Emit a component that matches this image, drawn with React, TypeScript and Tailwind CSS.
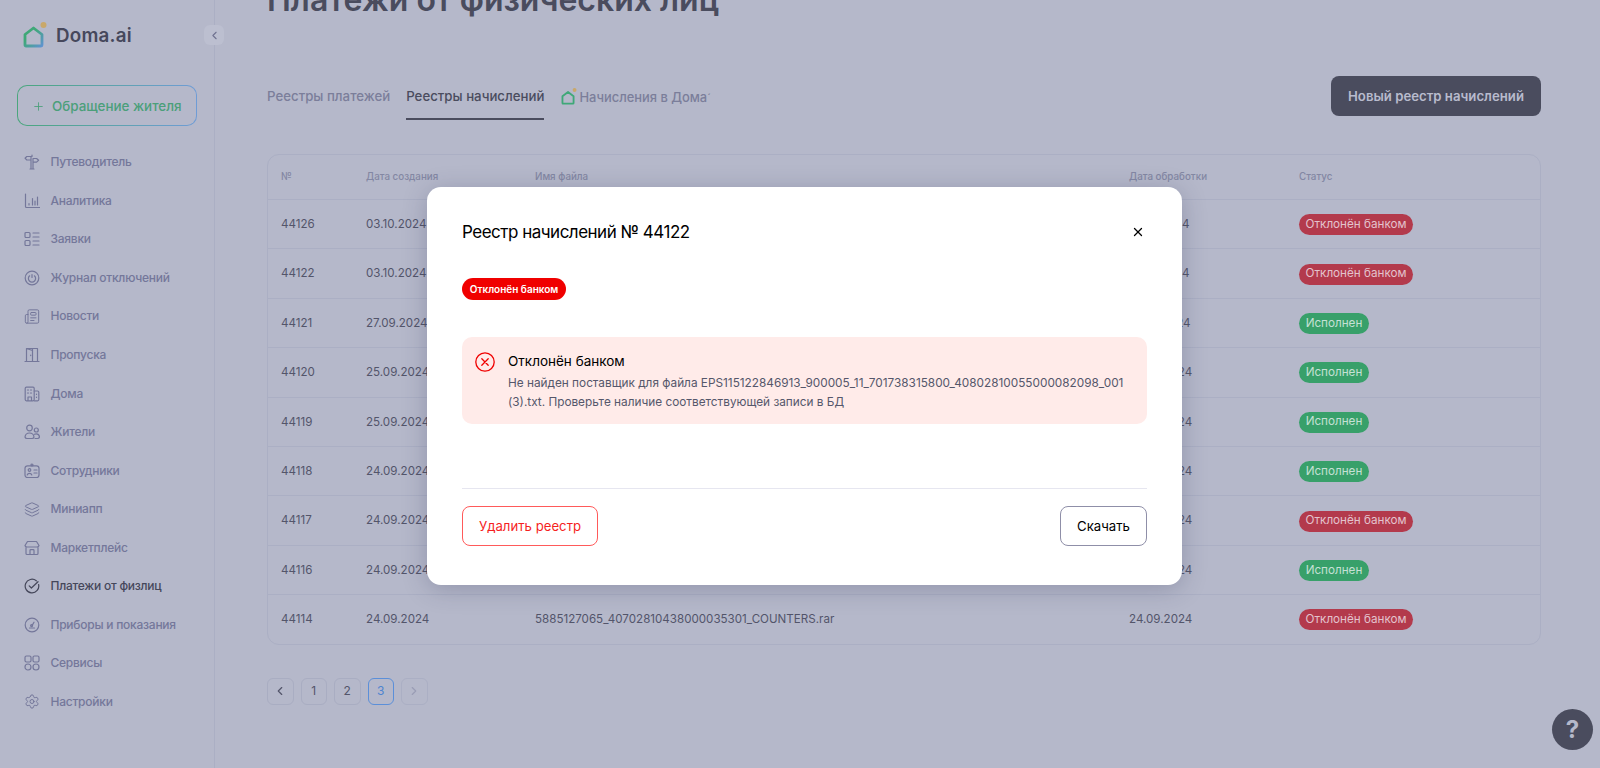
import type { ReactNode } from "react";
import { ChevronLeft, ChevronRight, Layers, Newspaper, Plus, Settings, X } from "lucide-react";

type Row = { id: string; created: string; file?: string; status: "rejected" | "done"; };

const rows: Row[] = [
  { id: "44126", created: "03.10.2024", status: "rejected" },
  { id: "44122", created: "03.10.2024", status: "rejected" },
  { id: "44121", created: "27.09.2024", status: "done" },
  { id: "44120", created: "25.09.2024", status: "done" },
  { id: "44119", created: "25.09.2024", status: "done" },
  { id: "44118", created: "24.09.2024", status: "done" },
  { id: "44117", created: "24.09.2024", status: "rejected" },
  { id: "44116", created: "24.09.2024", status: "done" },
  { id: "44114", created: "24.09.2024", file: "5885127065_40702810438000035301_COUNTERS.rar", status: "rejected" },
];

function Ico({ children }: { children: ReactNode }) {
  return (
    <svg viewBox="0 0 16 16" fill="none" stroke="currentColor" strokeWidth="1.2" strokeLinecap="round" strokeLinejoin="round" className="h-4 w-4">
      {children}
    </svg>
  );
}

const lucideProps = { size: 17, strokeWidth: 1.5 };

const nav: { label: string; icon: ReactNode; active?: boolean }[] = [
  {
    label: "Путеводитель",
    icon: (
      <Ico>
        <path d="M8 1v1.5M6 15h4M7 15V2.5H2.8L1 4.2l1.8 1.8H7M9 15V4.5h3.6l2 1.8-2 1.8H9" />
      </Ico>
    ),
  },
  {
    label: "Аналитика",
    icon: (
      <Ico>
        <path d="M1.5 1v12.5a1 1 0 0 0 1 1h13M5 12v-1.5M8.5 12V5.5M11 12V8M13.5 12V4" />
      </Ico>
    ),
  },
  {
    label: "Заявки",
    icon: (
      <Ico>
        <rect x="1" y="1.5" width="5" height="5" rx="1" />
        <rect x="1" y="9.5" width="5" height="5" rx="1" />
        <path d="M9 2h6M9 6h6M9 10h6M9 14h6" />
      </Ico>
    ),
  },
  {
    label: "Журнал отключений",
    icon: (
      <Ico>
        <circle cx="8" cy="8" r="6.8" />
        <path d="M5.6 5.8a3.6 3.6 0 1 0 4.8 0M8 4.5v3" />
      </Ico>
    ),
  },
  { label: "Новости", icon: <Newspaper {...lucideProps} /> },
  {
    label: "Пропуска",
    icon: (
      <Ico>
        <path d="M1 14.5h14M2.5 14.5v-13h11v13M8.5 1.5v13M2.5 1.5l6 2v11M6.7 8v.6" />
      </Ico>
    ),
  },
  {
    label: "Дома",
    icon: (
      <Ico>
        <rect x="1.2" y="1.2" width="9" height="13.6" rx="1.2" />
        <path d="M10.2 5h3.4a1.2 1.2 0 0 1 1.2 1.2v7.4a1.2 1.2 0 0 1-1.2 1.2h-3.4M3.5 4h1M6.5 4h1M3.5 7h1M6.5 7h1M4 14.5v-3.5h3.5v3.5M12.5 8v.5M12.5 11v.5" />
      </Ico>
    ),
  },
  {
    label: "Жители",
    icon: (
      <Ico>
        <circle cx="5.5" cy="4" r="2.8" />
        <circle cx="12.3" cy="6" r="2" />
        <path d="M1 13a2 2 0 0 0 2 1.5h5a2 2 0 0 0 2-1.5c-.3-2.5-2.2-4-4.5-4S1.3 10.5 1 13zM11 14.5h2.5a2 2 0 0 0 2-1.5c-.2-2-1.5-3.2-3.2-3.2-.7 0-1.3.2-1.8.5" />
      </Ico>
    ),
  },
  {
    label: "Сотрудники",
    icon: (
      <Ico>
        <rect x="1" y="2.8" width="14" height="11.7" rx="2.5" />
        <circle cx="8" cy="2" r="1" />
        <circle cx="5.5" cy="7" r="1.3" />
        <path d="M3.2 12a2.4 2.4 0 0 1 4.6 0M10 7h3M10 10h3" />
      </Ico>
    ),
  },
  { label: "Миниапп", icon: <Layers {...lucideProps} /> },
  {
    label: "Маркетплейс",
    icon: (
      <Ico>
        <path d="M3.5 1.5h9l2.5 4a2 2 0 0 1-2 1.5H3a2 2 0 0 1-2-1.5zM2 7v6.5a1 1 0 0 0 1 1h10a1 1 0 0 0 1-1V7M6 14.5v-4a.8.8 0 0 1 .8-.8h2.4a.8.8 0 0 1 .8.8v4" />
      </Ico>
    ),
  },
  {
    label: "Платежи от физлиц",
    active: true,
    icon: (
      <Ico>
        <path d="M14.6 6.5a6.8 6.8 0 1 1-2.3-3.7M5.2 7.8l2.2 2.2 6.6-6.3" />
      </Ico>
    ),
  },
  {
    label: "Приборы и показания",
    icon: (
      <Ico>
        <circle cx="8" cy="8" r="6.8" />
        <path d="M5.5 11h5M8 8.6l2-3.4" />
        <circle cx="7.6" cy="8.6" r="1" />
      </Ico>
    ),
  },
  {
    label: "Сервисы",
    icon: (
      <Ico>
        <rect x="1" y="1" width="6" height="6" rx="1.4" />
        <rect x="9" y="1" width="6" height="6" rx="1.4" />
        <circle cx="4" cy="12" r="3" />
        <circle cx="12" cy="12" r="3" />
      </Ico>
    ),
  },
  { label: "Настройки", icon: <Settings {...lucideProps} /> },
];

function Logo({ small }: { small?: boolean }) {
  return (
    <svg viewBox="0 0 24 26" fill="none" className={small ? "h-[17px] w-[16px]" : "h-[26px] w-[24px]"}>
      <defs>
        <linearGradient id="logo-l" x1="0" y1="0" x2="1" y2="1">
          <stop offset="0.35" stopColor="#3fa878" />
          <stop offset="1" stopColor="#5f93cf" />
        </linearGradient>
      </defs>
      <path
        d="M2 12.5 10.5 6 19 12.5V23a1 1 0 0 1-1 1H3a1 1 0 0 1-1-1z"
        stroke={small ? "#3fa878" : "url(#logo-l)"}
        strokeWidth="2.8"
        strokeLinejoin="round"
      />
      <circle cx="20.5" cy="3" r="3" fill="#c9a86a" />
    </svg>
  );
}

function Sidebar() {
  return (
    <aside className="relative flex h-full w-[215px] shrink-0 flex-col border-r border-[#abafc4] px-[17px]">
      <div className="mt-[22px] flex h-[26px] items-center gap-[9px] pl-[6px]">
        <Logo />
        <span className="mt-[2px] text-[18.8px] font-semibold tracking-[0.2px] text-[#46485c]">Doma.ai</span>
      </div>
      <button className="absolute right-[-10px] top-[25px] flex h-5 w-5 items-center justify-center rounded-md bg-[#bcbfd0] text-[#6f7290]">
        <ChevronLeft size={13} />
      </button>
      <div className="mt-[37px] flex h-[41px] w-[180px] items-center rounded-[10px] bg-gradient-to-r from-[#4aa67c] to-[#6f9cd6] p-px">
        <div className="flex h-full w-full items-center gap-[7px] rounded-[9px] bg-[#b5b8ca] pt-px pl-[14px] text-[#4b9f7a]">
          <Plus size={13} strokeWidth={1.6} />
          <span className="text-[13.4px] font-medium">Обращение жителя</span>
        </div>
      </div>
      <nav className="mt-[17px] flex flex-col">
        {nav.map((item) => (
          <div
            key={item.label}
            className={`flex h-[38.55px] items-center gap-[10.5px] pl-[7px] ${item.active ? "text-[#45475a]" : "text-[#74779a]"}`}
          >
            <span className="flex w-4 justify-center">{item.icon}</span>
            <span className="text-[12px] font-medium tracking-[-0.25px] whitespace-nowrap">{item.label}</span>
          </div>
        ))}
      </nav>
    </aside>
  );
}

function Status({ status }: { status: Row["status"] }) {
  return status === "rejected" ? (
    <span className="inline-flex h-[21px] w-[114px] items-center justify-center rounded-full bg-[#b33a4c] text-[11.7px] whitespace-nowrap text-[#e3c3cd]">
      Отклонён банком
    </span>
  ) : (
    <span className="inline-flex h-[21px] w-[70px] items-center justify-center rounded-full bg-[#38a06a] text-[11.7px] whitespace-nowrap text-[#c5e0d5]">
      Исполнен
    </span>
  );
}

function RegistryTable() {
  return (
    <div className="mt-[34px] overflow-hidden rounded-[12px] border border-[#abafc4] text-[11.6px]">
      <div className="grid h-[44px] grid-cols-[85px_169px_594px_170px_1fr] items-center pt-px pl-[13px] text-[9.8px] font-medium text-[#8387a3]">
        <span>№</span>
        <span>Дата создания</span>
        <span>Имя файла</span>
        <span>Дата обработки</span>
        <span>Статус</span>
      </div>
      {rows.map((row) => (
        <div
          key={row.id}
          className="grid h-[49.4px] grid-cols-[85px_169px_594px_170px_1fr] items-center border-t border-[#abafc4] pt-px pl-[13px] text-[#53556a]"
        >
          <span>{row.id}</span>
          <span>{row.created}</span>
          <span className="whitespace-nowrap">{row.file}</span>
          <span>{row.created}</span>
          <span>
            <Status status={row.status} />
          </span>
        </div>
      ))}
    </div>
  );
}

function Pagination() {
  const base = "flex h-[27px] w-[26.5px] items-center justify-center rounded-[6px] border text-[12px]";
  return (
    <div className="mt-[33px] flex gap-[7px]">
      <div className={`${base} border-[#a9adc2] text-[#53556a]`}>
        <ChevronLeft size={14} />
      </div>
      <div className={`${base} border-[#a9adc2] text-[#53556a]`}>1</div>
      <div className={`${base} border-[#a9adc2] text-[#53556a]`}>2</div>
      <div className={`${base} border-[#5b8fd9] text-[#4f84d0]`}>3</div>
      <div className={`${base} border-[#abafc4] text-[#9a9db5]`}>
        <ChevronRight size={14} />
      </div>
    </div>
  );
}

function Modal() {
  return (
    <div className="absolute top-[187px] left-[427px] w-[755px] rounded-[14px] bg-white px-[35px] pt-[33px] pb-[39px] shadow-[0_4px_24px_rgba(40,44,80,0.25)]">
      <div className="flex h-6 items-center justify-between">
        <h2 className="mt-[2px] text-[17px] font-normal tracking-[-0.5px] text-black">Реестр начислений № 44122</h2>
        <X size={14} strokeWidth={2.2} className="mr-[2px] text-black" />
      </div>
      <span className="mt-[34px] flex h-[22px] w-[104px] items-center justify-center rounded-full bg-[#f00000] text-[10px] font-semibold whitespace-nowrap text-white">
        Отклонён банком
      </span>
      <div className="mt-[37px] flex h-[87px] gap-[13px] rounded-[10px] bg-[#ffebe9] pt-[14px] pl-[13px]">
        <svg viewBox="0 0 20 20" fill="none" stroke="#f00000" strokeWidth="1.3" strokeLinecap="round" className="mt-px h-5 w-5 shrink-0">
          <circle cx="10" cy="10" r="9.2" />
          <path d="M6.8 6.8l6.4 6.4M13.2 6.8l-6.4 6.4" />
        </svg>
        <div>
          <div className="text-[13.5px] leading-5 text-black">Отклонён банком</div>
          <p className="mt-[3px] w-[630px] text-[11.8px] leading-[19px] text-[#55576b]">
            Не найден поставщик для файла EPS115122846913_900005_11_701738315800_40802810055000082098_001 (3).txt. Проверьте наличие соответствующей записи в БД
          </p>
        </div>
      </div>
      <div className="mt-[64px] border-t border-[#e6e6f0]" />
      <div className="mt-[17px] flex justify-between">
        <button className="h-10 w-[136px] rounded-[8px] border border-[#ff5a5a] pt-px text-[13.2px] text-[#f51f1f]">
          Удалить реестр
        </button>
        <button className="h-10 w-[87px] rounded-[8px] border border-[#8f8fa8] pt-px text-[13.2px] text-black">
          Скачать
        </button>
      </div>
    </div>
  );
}

export default function App() {
  return (
    <div className="relative flex h-[768px] w-full overflow-hidden bg-[#b5b8ca] font-['Inter',sans-serif]">
      <Sidebar />
      <main className="flex-1 pr-[59px] pl-[52px]">
        <h1 className="mt-[-22px] text-[32px] leading-[44px] font-semibold whitespace-nowrap text-[#4a4c5e]">
          Платежи от физических лиц
        </h1>
        <div className="mt-[54px] flex h-[44px] items-start justify-between">
          <div className="flex h-full gap-[16px] text-[13.25px]">
            <div className="flex h-10 items-center pt-[2px] font-medium text-[#7b7e9a]">Реестры платежей</div>
            <div className="flex h-full flex-col border-b-2 border-[#4a4c5e]">
              <div className="flex h-10 items-center pt-[2px] font-medium text-[#4a4c5e]">Реестры начислений</div>
            </div>
            <div className="flex h-10 items-center gap-[2px] pl-px text-[#7b7e9a]">
              <Logo small />
              <span className="mt-[4px] text-[12.9px] font-medium">Начисления в Дома<span className="text-[11px]">´</span></span>
            </div>
          </div>
          <button className="h-10 w-[210px] rounded-[8px] bg-[#4a4c5e] pt-[2px] text-[13.2px] font-semibold text-[#b8bbcd]">
            Новый реестр начислений
          </button>
        </div>
        <RegistryTable />
        <Pagination />
      </main>
      <div className="absolute right-[7px] bottom-[18px] flex h-[41px] w-[41px] items-center justify-center rounded-full bg-[#4a4c5e] text-[24px] font-bold text-[#b5b8ca]">
        ?
      </div>
      <Modal />
    </div>
  );
}
